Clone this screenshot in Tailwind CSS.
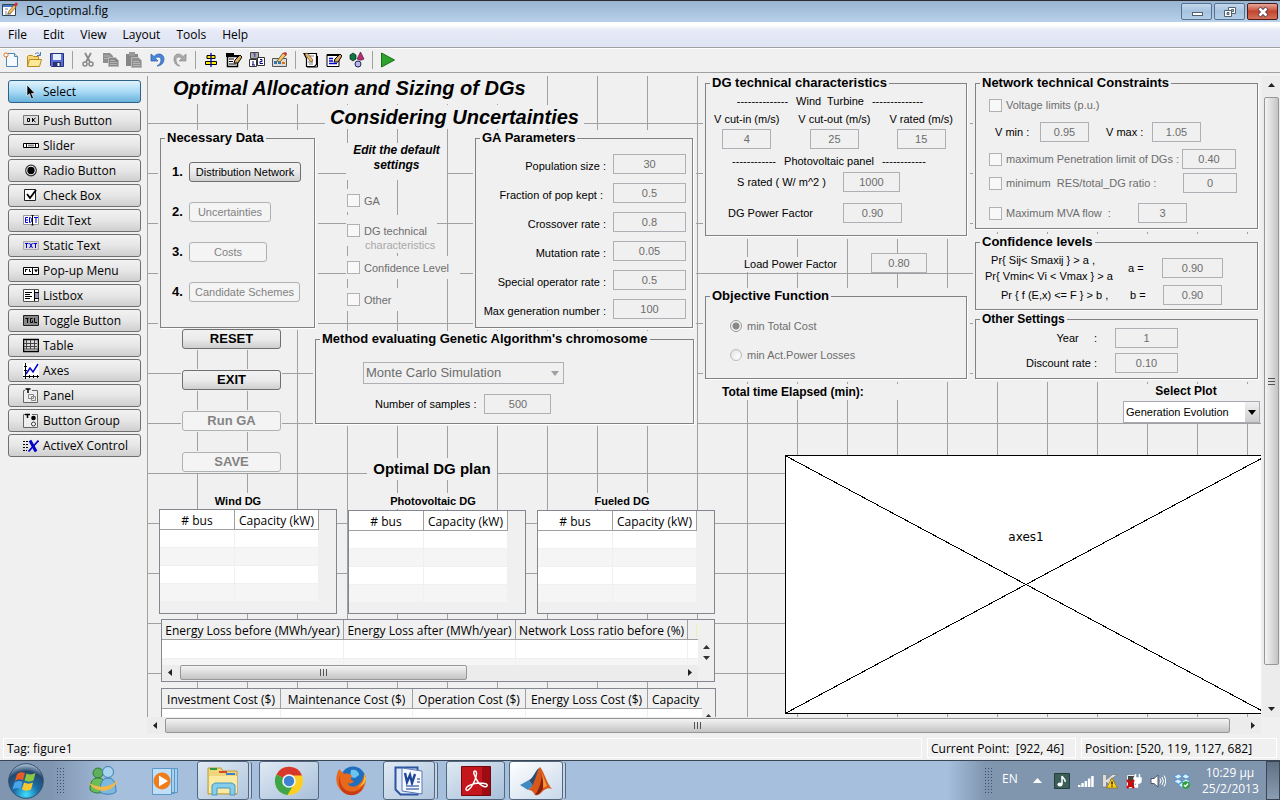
<!DOCTYPE html>
<html lang="en">
<head>
    <meta charset="UTF-8">
    <meta name="viewport" content="width=device-width, initial-scale=1.0">
    <title>DG_optimal.fig</title>
    <script src="https://cdn.jsdelivr.net/npm/@tailwindcss/browser@4"></script>
</head>
<body class="flex h-screen flex-col overflow-hidden bg-[#f0f0f0] font-['Open_Sans','Noto_Sans',sans-serif] text-[12px] leading-4 text-black">

    <!-- Title bar -->
    <header class="flex h-[22px] shrink-0 items-center border-t border-[#2b2b2b] bg-linear-to-b from-[#98b4d2] to-[#b9d1ea] pl-[2px] pr-[2px]">
        <svg class="mb-1 size-4" viewBox="0 0 16 16"><path d="M.5 2.5h13v11H.5z" fill="#fff" stroke="#345"/><path d="M1 3h12v2H1z" fill="#4a78c0"/><path d="M3 7h3M3 10h2M3 12h6" stroke="#789"/><path d="M7 9l5-6 2 2-5 6-3 1z" fill="#f0c060" stroke="#704010" stroke-width=".6"/><path d="M12 3l2-3 2 2-2 3z" fill="#c33"/></svg>
        <h1 class="mb-px ml-2 grow">DG_optimal.fig</h1>
        <div class="flex gap-[2px]">
            <button aria-label="Minimize" class="flex h-[17px] w-[31px] items-center justify-center rounded-[2px] border border-[#56708f] bg-linear-to-b from-[#c4d8ec] via-[#a6c2de] to-[#b4cfe8]"><svg class="h-3 w-4" viewBox="0 0 16 12"><rect x="3.500" y="6.500" width="10" height="3" fill="#fff" stroke="#53606e"/></svg></button>
            <button aria-label="Restore" class="flex h-[17px] w-[31px] items-center justify-center rounded-[2px] border border-[#56708f] bg-linear-to-b from-[#c4d8ec] via-[#a6c2de] to-[#b4cfe8]"><svg class="h-3 w-4" viewBox="0 0 16 12"><path d="M6.500 1.500h7v6h-7z" fill="#fff" stroke="#53606e"/><path d="M9.500 3.500h2v2h-2z" fill="#a6c2de" stroke="#53606e"/><path d="M2.500 4.500h7v6h-7z" fill="#fff" stroke="#53606e"/><path d="M5 6.500h2v2H5z" fill="#a6c2de" stroke="#53606e"/></svg></button>
            <button aria-label="Close" class="flex h-[17px] w-[31px] items-center justify-center rounded-[2px] border border-[#4c1a16] bg-linear-to-b from-[#e4a79b] via-[#c5442c] to-[#d4705a]"><svg class="h-3 w-4" viewBox="0 0 16 12"><path d="M4 2l8 8M12 2l-8 8" stroke="#53404a" stroke-width="4.500"/><path d="M4.500 2.500l7 7M11.500 2.500l-7 7" stroke="#fff" stroke-width="2.600"/></svg></button>
        </div>
    </header>

    <!-- Menu bar -->
    <nav class="flex h-[26px] shrink-0 items-center gap-4 border-b border-[#a0a0a0] bg-linear-to-b from-white from-10% via-[#e6eaf6] via-35% to-[#dfe4f4] pl-2">
        <button>File</button>
        <button>Edit</button>
        <button>View</button>
        <button>Layout</button>
        <button>Tools</button>
        <button>Help</button>
    </nav>

    <!-- Toolbar -->
    <div class="flex h-[25px] shrink-0 items-center gap-[7px] border-t border-b border-t-white border-b-[#a0a0a0] pb-px pl-[3px] [&_button]:size-4 [&_svg]:size-4">
        <button aria-label="New"><svg viewBox="0 0 16 16"><path d="M3.500 1.500h8l3 3v10h-11z" fill="#f4faff" stroke="#4f86b8"/><path d="M11.500 1.500v3h3" fill="#cfe2f4" stroke="#4f86b8"/><path d="M3 0v6M0 3h6M1 1l4 4M5 1L1 5" stroke="#f08030"/><circle cx="3" cy="3" r="1.200" fill="#fff"/></svg></button>
        <button aria-label="Open"><svg viewBox="0 0 16 16"><path d="M1.500 14.500V4.500l1-1h4l1 1h5v3" fill="#f5d776" stroke="#b98a20"/><path d="M1.500 14.500l2-7h12l-2 7z" fill="#fde99a" stroke="#b98a20"/><path d="M9 2c2-2 4-1 5 1M14.500 0v3.500H11" fill="none" stroke="#4a7ab5"/></svg></button>
        <button aria-label="Save"><svg viewBox="0 0 16 16"><path d="M1.500 1.500h13v13h-12l-1-1z" fill="#5a6cd8" stroke="#26307c"/><path d="M4 2h8v6H4z" fill="#e8f0fc"/><path d="M4 10h8v4H4z" fill="#2c3470"/><path d="M8.500 11h2v3h-2z" fill="#fff"/></svg></button>
        <span class="h-[18px] w-px bg-[#a0a0a0]"></span>
        <button aria-label="Cut" disabled><svg viewBox="0 0 16 16"><path d="M5 1l5 9M11 1L6 10" stroke="#8a8a8a" stroke-width="1.800"/><circle cx="5" cy="12" r="2" fill="none" stroke="#8a8a8a" stroke-width="1.500"/><circle cx="11" cy="12" r="2" fill="none" stroke="#8a8a8a" stroke-width="1.500"/></svg></button>
        <button aria-label="Copy" disabled><svg viewBox="0 0 16 16"><path d="M0 1h7l3 3v7H0z" fill="#8e8e8e"/><path d="M5.500 5.500h7l3 3v6h-10z" fill="#888" stroke="#b8b8b8"/><path d="M7 8.500h5M7 10.500h7M7 12.500h7M1 4h6M1 6.500h4" stroke="#b4b4b4"/></svg></button>
        <button aria-label="Paste" disabled><svg viewBox="0 0 16 16"><path d="M0 2h12v12H0z" fill="#868686"/><path d="M3 0h6v4H3z" fill="#999"/><path d="M5.500 5.500h7l3 3v7h-10z" fill="#909090" stroke="#b8b8b8"/><path d="M7 9.500h6M7 11.500h7M7 13.500h7" stroke="#b4b4b4"/></svg></button>
        <button aria-label="Undo"><svg viewBox="0 0 16 16"><path d="M2 2v7h7L6.500 6.500C9 4 12 5 12 8c0 3-2 5-4 6 4 0 7-3 7-7 0-5-6-7-10-2.500z" fill="#4a86d8" stroke="#2a5aa8" stroke-width=".7"/></svg></button>
        <button aria-label="Redo" disabled><svg viewBox="0 0 16 16"><path d="M14 2v7H7l2.500-2.500C7 4 4 5 4 8c0 3 2 5 4 6-4 0-6-3-6-7 0-5 5-7 9-2.500z" fill="#a8a8a8" stroke="#8e8e8e" stroke-width=".7"/></svg></button>
        <span class="h-[18px] w-px bg-[#a0a0a0]"></span>
        <button aria-label="Align Objects"><svg viewBox="0 0 16 16"><path d="M4 3.500h8v3H4zM2.500 9.500h11v3h-11z" fill="#fe0" stroke="#000"/><path d="M8 1v14" stroke="#00a" stroke-width="1.300"/></svg></button>
        <button aria-label="Menu Editor"><svg viewBox="0 0 16 16"><path d="M0 1h8v2h6v2H0z"/><path d="M1.500 4.500h10v10h-10z" fill="#fff" stroke="#000" stroke-width="1.500"/><path d="M3 7h5M3 9.500h4M3 12h7" stroke="#000"/><path d="M8 11l1-3 5-5 2 2-4 6z" fill="#d9a860" stroke="#000"/></svg></button>
        <button aria-label="Tab Order Editor"><svg viewBox="0 0 16 16"><path d="M1.500.5h8v6h-8z" fill="#aaa" stroke="#444"/><path d="M.5 7.500h7v7h-7zM8.500 5.500h7v8h-7z" fill="#fff" stroke="#333"/><path d="M4.500 2h2M5 4h1.500M4 9v4M3 13h3M11 7.500h2v2h-2v2h3" fill="none" stroke="#008"/></svg></button>
        <button aria-label="Toolbar Editor"><svg viewBox="0 0 16 16"><path d="M.5 6.500h14v8H.5z" fill="#ddd" stroke="#555"/><path d="M2 9h3v3H2zM6 9h3v3H6z" fill="#37a"/><path d="M10 10h3v2h-3z" fill="#d70"/><path d="M5 9l6-8 3 2-6 7z" fill="#f3c763" stroke="#764"/><path d="M11 1l3-1 1 2-1 2z" fill="#c33"/></svg></button>
        <span class="h-[18px] w-px bg-[#a0a0a0]"></span>
        <button aria-label="M-file Editor"><svg viewBox="0 0 16 16"><path d="M1 1.500h12.500v11l-2 2H3.500v-8z" fill="#fff" stroke="#000" stroke-width="1.200"/><path d="M14.500 4v11H4" fill="none" stroke="#000"/><path d="M6 4h5M5 10h5M6 12h4" stroke="#777"/><path d="M2 2l2-1 6 7-1 2-2-1z" fill="#f2c060" stroke="#643" stroke-width=".7"/></svg></button>
        <button aria-label="Property Inspector"><svg viewBox="0 0 16 16"><path d="M1 2.500h12v12H1z" fill="#fff" stroke="#000"/><path d="M1 3h12" stroke="#000" stroke-width="2"/><path d="M3 6.500h4M3 9h4M3 11.500h8" stroke="#00c" stroke-width="1.300"/><path d="M8 10l1-3 5-5 2 2-4 6z" fill="#d9a860" stroke="#000"/></svg></button>
        <button aria-label="Object Browser"><svg viewBox="0 0 16 16"><path d="M1 3l3-2 3 2v4L4 9 1 7z" fill="#0a7a40" stroke="#000" stroke-width=".6"/><path d="M11.500 0l3.500 7c-2 1.500-5 1.500-7 0z" fill="#b03070" stroke="#503" stroke-width=".6"/><circle cx="9" cy="12" r="3" fill="#b4b8ec" stroke="#225"/></svg></button>
        <span class="h-[18px] w-px bg-[#a0a0a0]"></span>
        <button aria-label="Run Figure"><svg viewBox="0 0 16 16"><path d="M1.500 1l13 7-13 7z" fill="#2da22d" stroke="#187018"/></svg></button>
    </div>

    <div class="flex min-h-0 grow">
        <!-- Component palette -->
        <aside class="flex w-[147px] shrink-0 flex-col gap-[2px] pl-2 pr-[6px] pt-[7px] [&_button]:flex [&_button]:h-[23px] [&_button]:items-center [&_button]:gap-1 [&_button]:rounded-[3px] [&_button]:border [&_button]:pl-[14px] [&_svg]:size-4">
            <button class="mb-1 border-[#2c628b] bg-linear-to-b from-[#e0f2fc] via-[#a9dbf5] to-[#69b1da]"><svg viewBox="0 0 16 16"><path d="M4 1v11l2.500-2.300L8.500 15l2-1-2-4.500H12z" stroke="#fff" stroke-width=".6"/></svg>Select</button>
            <button class="border-[#707070] bg-linear-to-b from-[#f2f2f2] via-[#e6e6e6] to-[#cfcfcf]"><svg viewBox="0 0 16 16"><path d="M.5 2.500h15v9H.5z" fill="#ddd" stroke="#777"/><path d="M1 11.500h14.500v-9" fill="none" stroke="#333"/><path d="M4.500 5.500h2v3h-2zM9.500 5v4M12.500 5L10 7l2.500 2" fill="none" stroke="#000"/></svg>Push Button</button>
            <button class="border-[#707070] bg-linear-to-b from-[#f2f2f2] via-[#e6e6e6] to-[#cfcfcf]"><svg viewBox="0 0 16 16"><path d="M.5 5.500h15v4H.5z" fill="#fff" stroke="#000"/><path d="M3.500 6v4M12.500 6v4" stroke="#000"/><path d="M5 6.500h6v2H5z" fill="#888"/></svg>Slider</button>
            <button class="border-[#707070] bg-linear-to-b from-[#f2f2f2] via-[#e6e6e6] to-[#cfcfcf]"><svg viewBox="0 0 16 16"><circle cx="8" cy="7.500" r="5.300" fill="#fff" stroke="#333" stroke-width="1.200"/><circle cx="8" cy="7.500" r="3.700"/></svg>Radio Button</button>
            <button class="border-[#707070] bg-linear-to-b from-[#f2f2f2] via-[#e6e6e6] to-[#cfcfcf]"><svg viewBox="0 0 16 16"><path d="M1.500 1.500h11v11h-11z" fill="#fff" stroke="#222"/><path d="M4 6l3 4 6-8" fill="none" stroke="#000" stroke-width="1.800"/></svg>Check Box</button>
            <button class="border-[#707070] bg-linear-to-b from-[#f2f2f2] via-[#e6e6e6] to-[#cfcfcf]"><svg viewBox="0 0 16 16"><path d="M.5 2.500h15v9H.5z" fill="#fff" stroke="#999"/><path d="M5 4.500H2.500v5H5M2.500 7H5M6.500 4.500v5c3 0 3-5 0-5M11 4.500h4M13 4.500V10" fill="none" stroke="#00c"/><path d="M9.500 3v9M8.500 2.500h2M8.500 12h2" stroke="#000"/></svg>Edit Text</button>
            <button class="border-[#707070] bg-linear-to-b from-[#f2f2f2] via-[#e6e6e6] to-[#cfcfcf]"><svg viewBox="0 0 16 16"><path d="M.5 3.500h15v8H.5z" fill="#ddd" stroke="#aaa"/><path d="M2 5.500h3.500M3.500 5.500V10M6.500 5l3 5M9.500 5l-3 5M10.500 5.500H14M12.500 5.500V10" stroke="#00c"/></svg>Static Text</button>
            <button class="border-[#707070] bg-linear-to-b from-[#f2f2f2] via-[#e6e6e6] to-[#cfcfcf]"><svg viewBox="0 0 16 16"><path d="M.5 4.500h15v7H.5z" fill="#fff" stroke="#000"/><path d="M9.500 5v6" stroke="#000"/><path d="M2.500 6v3M3 6.500h1.500M6.500 6v2.500H8" fill="none" stroke="#000"/><path d="M11 6.500h4l-2 3z"/></svg>Pop-up Menu</button>
            <button class="border-[#707070] bg-linear-to-b from-[#f2f2f2] via-[#e6e6e6] to-[#cfcfcf]"><svg viewBox="0 0 16 16"><path d="M.5 1.500h15v12H.5z" fill="#fff" stroke="#555"/><path d="M2 4.500h7M2 6.500h5M2 8.500h7M2 10.500h5" stroke="#000"/><path d="M11.500 2v11M12 4.500h4M12 10.500h4" stroke="#000"/><path d="M12 5h3v5h-3z" fill="#99b"/></svg>Listbox</button>
            <button class="border-[#707070] bg-linear-to-b from-[#f2f2f2] via-[#e6e6e6] to-[#cfcfcf]"><svg viewBox="0 0 16 16"><path d="M.5 2.500h15v10H.5z" fill="#888" stroke="#222"/><path d="M2.500 5.500h3M4.500 5.500V10M9.500 5.500h-2v4h2v-2M11.500 5v4.500H14" fill="none" stroke="#000"/></svg>Toggle Button</button>
            <button class="border-[#707070] bg-linear-to-b from-[#f2f2f2] via-[#e6e6e6] to-[#cfcfcf]"><svg viewBox="0 0 16 16"><path d="M.5 1.500h15v12H.5z" fill="#ddd" stroke="#000" stroke-width="1.500"/><path d="M3.500 2v9M7.500 2v9M11.500 2v9M1 5.500h13M1 8.500h13M1 11h14" stroke="#444"/></svg>Table</button>
            <button class="border-[#707070] bg-linear-to-b from-[#f2f2f2] via-[#e6e6e6] to-[#cfcfcf]"><svg viewBox="0 0 16 16"><path d="M0 0h16v15H0z" fill="#fff"/><path d="M2.500 0v16M0 13.500h16M1 3.500h3M1 7.500h3M6.500 12v3M10.500 12v3M14.500 12v3" stroke="#000"/><path d="M3 11l4-6 3 4 5-8" fill="none" stroke="#00c" stroke-width="1.500"/></svg>Axes</button>
            <button class="border-[#707070] bg-linear-to-b from-[#f2f2f2] via-[#e6e6e6] to-[#cfcfcf]"><svg viewBox="0 0 16 16"><path d="M2 2.500H.5v12h14v-12H9" fill="#eee" stroke="#666"/><path d="M2.500 1h5M5 1v4" stroke="#000" stroke-width="1.500"/><path d="M5.500 6.500h5v4h-5zM8.500 8.500h4v4h-4z" fill="none" stroke="#888"/></svg>Panel</button>
            <button class="border-[#707070] bg-linear-to-b from-[#f2f2f2] via-[#e6e6e6] to-[#cfcfcf]"><svg viewBox="0 0 16 16"><path d="M2 1.500H.5v13h14v-13H9" fill="#eee" stroke="#666"/><path d="M2 1.500h5M4.500 1v4" stroke="#000" stroke-width="1.500"/><circle cx="10.500" cy="5" r="2.300"/><circle cx="10.500" cy="11" r="2" fill="#fff" stroke="#333"/></svg>Button Group</button>
            <button class="border-[#707070] bg-linear-to-b from-[#f2f2f2] via-[#e6e6e6] to-[#cfcfcf]"><svg viewBox="0 0 16 16"><path d="M0 3.500h5M0 6.500h6M0 9.500h5M0 12.500h4" stroke="#000" stroke-dasharray="2 1"/><path d="M7 2.500l6 11" stroke="#00c" stroke-width="3"/><path d="M15.500 2.500L5.500 13.500" stroke="#00c" stroke-width="1.800"/></svg>ActiveX Control</button>
        </aside>

        <div class="flex min-w-0 grow flex-col">
            <!-- Layout canvas: every component sits where the designer dropped it -->
            <main class="relative mt-[3px] min-h-0 grow overflow-hidden bg-[linear-gradient(to_right,#a0a0a0_1px,transparent_1px),linear-gradient(to_bottom,#a0a0a0_1px,transparent_1px)] bg-[size:50px_50px] bg-[position:0_0,0_47px] font-['Liberation_Sans',Arial,sans-serif] text-[11px] leading-[14px] [&_[type=checkbox]]:size-[13px] [&_[type=checkbox]]:shrink-0 [&_[type=checkbox]]:appearance-none [&_[type=checkbox]]:border [&_[type=checkbox]]:border-[#b1b1b1] [&_[type=checkbox]]:bg-[#f8f8f8] [&_[type=text]]:h-5 [&_[type=text]]:shrink-0 [&_[type=text]]:border [&_[type=text]]:border-[#afb0b5] [&_[type=text]]:text-center [&_[type=text]]:text-[#6d6d6d] [&_fieldset]:border [&_fieldset]:border-[#828282] [&_fieldset]:shadow-[1px_1px_0_#fff] [&_label]:whitespace-pre [&_legend]:ml-1 [&_legend]:px-[2px] [&_legend]:font-bold [&_legend]:leading-4">

                <h2 class="absolute left-[3px] top-0 h-7 w-[390px] bg-[#f0f0f0] pl-[23px] text-[20px] leading-6 font-bold italic whitespace-nowrap">Optimal Allocation and Sizing of DGs</h2>
                <h2 class="absolute left-[178px] top-[29px] h-6 w-[259px] bg-[#f0f0f0] text-center text-[20px] leading-6 font-bold italic whitespace-nowrap">Considering Uncertainties</h2>

                <!-- Necessary Data -->
                <div class="absolute left-[11px] top-[54px] h-[200px] w-[160px] bg-[#f0f0f0] pl-[2px]">
                    <fieldset class="h-[198px] w-[155px]">
                        <legend class="text-[13px]">Necessary Data</legend>
                        <div class="flex flex-col gap-5 pl-[11px] pt-4 [&_b]:w-[17px] [&_b]:text-[13px] [&_button]:h-5 [&_button]:rounded-[3px] [&_button]:border [&>div]:flex [&>div]:items-center">
                            <div><b>1.</b><button class="w-28 border-[#707070] bg-linear-to-b from-[#f2f2f2] via-[#ebebeb] to-[#cfcfcf]">Distribution Network</button></div>
                            <div><b>2.</b><button disabled class="w-[82px] border-[#adb2b5] bg-[#f4f4f4] text-[#838383]">Uncertainties</button></div>
                            <div><b>3.</b><button disabled class="w-[78px] border-[#adb2b5] bg-[#f4f4f4] text-[#838383]">Costs</button></div>
                            <div><b>4.</b><button disabled class="w-[111px] border-[#adb2b5] bg-[#f4f4f4] text-[#838383]">Candidate Schemes</button></div>
                        </div>
                    </fieldset>
                </div>

                <!-- Action buttons -->
                <div class="absolute left-[35px] top-[253px] flex w-[99px] flex-col gap-[21px] text-[13px] [&_button]:h-5 [&_button]:rounded-[3px] [&_button]:border [&_button]:font-bold [&_button]:ring-1 [&_button]:ring-[#f0f0f0]">
                    <button class="border-[#707070] bg-linear-to-b from-[#f2f2f2] via-[#ebebeb] to-[#cfcfcf]">RESET</button>
                    <button class="border-[#707070] bg-linear-to-b from-[#f2f2f2] via-[#ebebeb] to-[#cfcfcf]">EXIT</button>
                    <button disabled class="border-[#adb2b5] bg-[#f4f4f4] text-[#838383]">Run GA</button>
                    <button disabled class="border-[#adb2b5] bg-[#f4f4f4] text-[#838383]">SAVE</button>
                </div>

                <!-- Default settings toggles -->
                <p class="absolute left-[199px] top-[67px] h-[37px] w-[101px] bg-[#f0f0f0] text-center text-[12px] leading-[15px] font-bold italic">Edit the default settings</p>
                <label class="absolute left-[199px] top-[113px] flex h-[23px] w-10 items-center gap-1 bg-[#f0f0f0] pl-px text-[#6d6d6d]"><input type="checkbox" disabled>GA</label>
                <label class="absolute left-[199px] top-[139px] flex h-[31px] w-[91px] items-center gap-1 bg-[#f0f0f0] pl-px text-[#6d6d6d]"><input type="checkbox" disabled>DG technical</label>
                <p class="absolute left-[214px] top-[162px] h-[15px] w-[76px] bg-[#f0f0f0] pl-1 text-[#a8a8a8]">characteristics</p>
                <label class="absolute left-[199px] top-[180px] flex h-[23px] w-[114px] items-center gap-1 bg-[#f0f0f0] pl-px text-[#6d6d6d]"><input type="checkbox" disabled>Confidence Level</label>
                <label class="absolute left-[199px] top-[212px] flex h-[23px] w-[60px] items-center gap-1 bg-[#f0f0f0] pl-px text-[#6d6d6d]"><input type="checkbox" disabled>Other</label>

                <!-- GA Parameters -->
                <div class="absolute left-[326px] top-[54px] h-[200px] w-[223px] bg-[#f0f0f0] pl-[2px]">
                    <fieldset class="h-[198px] w-[218px]">
                        <legend class="text-[13px]">GA Parameters</legend>
                        <div class="flex flex-col gap-[9px] pr-[6px] pt-2 [&_input]:w-[73px] [&>div]:flex [&>div]:items-center [&>div]:justify-end [&>div]:gap-[7px] [&_label]:pt-1">
                            <div><label for="pop">Population size :</label><input id="pop" type="text" value="30" disabled></div>
                            <div><label for="kept">Fraction of pop kept : </label><input id="kept" type="text" value="0.5" disabled></div>
                            <div><label for="cross">Crossover rate :</label><input id="cross" type="text" value="0.8" disabled></div>
                            <div><label for="mut">Mutation rate :</label><input id="mut" type="text" value="0.05" disabled></div>
                            <div><label for="spec">Special operator rate :</label><input id="spec" type="text" value="0.5" disabled></div>
                            <div><label for="maxgen">Max generation number :</label><input id="maxgen" type="text" value="100" disabled></div>
                        </div>
                    </fieldset>
                </div>

                <!-- Evaluation method -->
                <div class="absolute left-[166px] top-[255px] h-[95px] w-[384px] bg-[#f0f0f0] pl-[2px]">
                    <fieldset class="h-[93px] w-[379px]">
                        <legend class="text-[13px]">Method evaluating Genetic Algorithm's chromosome</legend>
                        <div class="relative ml-[47px] mt-[15px] w-[201px]">
                            <select disabled aria-label="Evaluation method" class="block h-[22px] w-full appearance-none border border-[#afb0b5] pl-[2px] text-[13px] text-[#6d6d6d] opacity-100">
                                <option>Monte Carlo Simulation</option>
                            </select>
                            <svg class="pointer-events-none absolute right-[5px] top-[9px] h-[5px] w-2" viewBox="0 0 8 5"><path d="M0 0h8L4 5z" fill="#a0a0a0"/></svg>
                        </div>
                        <div class="mt-[10px] flex items-center gap-2 pl-[59px]"><label for="samples">Number of samples :</label><input id="samples" type="text" value="500" disabled class="w-[67px]"></div>
                    </fieldset>
                </div>

                <!-- DG technical characteristics -->
                <div class="absolute left-[556px] -top-px h-[164px] w-[267px] bg-[#f0f0f0] pl-[2px]">
                    <fieldset class="h-[161px] w-[262px]">
                        <legend class="text-[13px]">DG technical characteristics</legend>
                        <p class="mt-[3px] flex justify-center gap-2 whitespace-pre pr-3"><span>--------------</span><span>Wind  Turbine</span><span>--------------</span></p>
                        <div class="mt-1 flex justify-between px-2 pr-[13px] [&_input]:w-[49px] [&>div]:flex [&>div]:flex-col [&>div]:items-center [&>div]:gap-[3px]">
                            <div><label for="cutin">V cut-in (m/s)</label><input id="cutin" type="text" value="4" disabled></div>
                            <div><label for="cutout">V cut-out (m/s)</label><input id="cutout" type="text" value="25" disabled></div>
                            <div><label for="rated">V rated (m/s)</label><input id="rated" type="text" value="15" disabled></div>
                        </div>
                        <p class="mt-[5px] flex justify-center gap-2 pr-[14px]"><span>------------</span><span>Photovoltaic panel</span><span>------------</span></p>
                        <div class="mt-1 flex items-center pl-[31px]"><label for="srated" class="w-[106px]">S rated ( W/ m^2 )</label><input id="srated" type="text" value="1000" disabled class="w-[57px]"></div>
                        <div class="mt-[11px] flex items-center pl-[22px]"><label for="dgpf" class="w-[115px]">DG Power Factor</label><input id="dgpf" type="text" value="0.90" disabled class="w-[59px]"></div>
                    </fieldset>
                </div>

                <label for="loadpf" class="absolute left-[594px] top-[181px] h-[15px] w-[100px] bg-[#f0f0f0] pl-[3px]">Load Power Factor</label>
                <input id="loadpf" type="text" value="0.80" disabled class="absolute left-[724px] top-[177px] w-14 bg-[#f0f0f0]">

                <!-- Objective Function -->
                <div class="absolute left-[556px] top-[212px] h-[94px] w-[267px] bg-[#f0f0f0] pl-[2px]">
                    <fieldset class="h-[91px] w-[262px]">
                        <legend class="text-[13px]">Objective Function</legend>
                        <div class="flex flex-col gap-[15px] pl-6 pt-[15px] text-[#6d6d6d]">
                            <label class="flex items-center gap-[5px]"><input type="radio" name="objective" disabled checked class="size-3 appearance-none rounded-full border border-[#999] bg-[radial-gradient(circle,#888_0_3px,#f4f4f4_4px)]">min Total Cost</label>
                            <label class="flex items-center gap-[5px]"><input type="radio" name="objective" disabled class="size-3 appearance-none rounded-full border border-[#bbb] bg-[radial-gradient(circle_at_70%_70%,#fff,#ddd)]">min Act.Power Losses</label>
                        </div>
                    </fieldset>
                </div>

                <p class="absolute left-[573px] top-[308px] h-4 w-[180px] bg-[#f0f0f0] pl-[2px] text-[12px] leading-4 font-bold">Total time Elapsed (min):</p>

                <!-- Network technical Constraints -->
                <div class="absolute left-[826px] -top-px h-[157px] w-[288px] bg-[#f0f0f0] pl-[2px]">
                    <fieldset class="h-[154px] w-[283px]">
                        <legend class="text-[13px]">Network technical Constraints</legend>
                        <div class="pl-[13px] pt-[7px] text-[#6d6d6d]">
                            <label class="flex items-center gap-1"><input type="checkbox" disabled>Voltage limits (p.u.)</label>
                            <div class="mt-[10px] flex items-center pl-[6px] text-black"><label for="vmin" class="w-[45px]">V min :</label><input id="vmin" type="text" value="0.95" disabled class="w-[49px]"><label for="vmax" class="ml-[17px] w-[46px]">V max :</label><input id="vmax" type="text" value="1.05" disabled class="w-[49px]"></div>
                            <div class="mt-[7px] flex items-center"><label class="flex w-[193px] items-center gap-1"><input type="checkbox" disabled>maximum Penetration limit of DGs :</label><input type="text" value="0.40" disabled aria-label="Maximum penetration" class="w-[54px]"></div>
                            <div class="mt-1 flex items-center"><label class="flex w-[194px] items-center gap-1"><input type="checkbox" disabled>minimum  RES/total_DG ratio :</label><input type="text" value="0" disabled aria-label="Minimum ratio" class="w-[54px]"></div>
                            <div class="mt-[10px] flex items-center"><label class="flex w-[149px] items-center gap-1"><input type="checkbox" disabled>Maximum MVA flow  :</label><input type="text" value="3" disabled aria-label="Maximum MVA flow" class="w-[49px]"></div>
                        </div>
                    </fieldset>
                </div>

                <!-- Confidence levels -->
                <div class="absolute left-[826px] top-[158px] h-[78px] w-[288px] bg-[#f0f0f0] pl-[2px]">
                    <fieldset class="h-[76px] w-[283px]">
                        <legend class="text-[13px]">Confidence levels</legend>
                        <div class="flex items-center pl-[9px] pt-[2px]"><p class="w-[143px] leading-4">&nbsp; Pr{ Sij&lt; Smaxij } &gt; a ,<br>Pr{ Vmin&lt; Vi &lt; Vmax } &gt; a</p><label for="ca" class="w-[34px]">a =</label><input id="ca" type="text" value="0.90" disabled class="w-[61px]"></div>
                        <div class="mt-px flex items-center pl-[25px]"><p class="w-[129px]">Pr { f (E,x) &lt;= F } &gt; b ,</p><label for="cb" class="w-[33px]">b =</label><input id="cb" type="text" value="0.90" disabled class="w-[59px]"></div>
                    </fieldset>
                </div>

                <!-- Other Settings -->
                <div class="absolute left-[826px] top-[235px] h-[71px] w-[288px] bg-[#f0f0f0] pl-[2px]">
                    <fieldset class="h-[68px] w-[283px]">
                        <legend class="text-[12px]">Other Settings</legend>
                        <div class="flex flex-col gap-[5px] pt-px [&_input]:w-[63px] [&_label]:w-[121px] [&_label]:text-right [&>div]:flex [&>div]:items-center [&>div]:gap-[18px]">
                            <div><label for="year">Year     :</label><input id="year" type="text" value="1" disabled></div>
                            <div><label for="disc">Discount rate :</label><input id="disc" type="text" value="0.10" disabled></div>
                        </div>
                    </fieldset>
                </div>

                <!-- Plot selector -->
                <label for="plot" class="absolute left-[964px] top-[308px] h-[17px] w-[150px] bg-[#f0f0f0] text-center text-[12px] font-bold">Select Plot</label>
                <div class="absolute left-[976px] top-[325px] w-[137px]">
                    <select id="plot" class="block h-[22px] w-full appearance-none border border-[#a9abb3] bg-white pl-[2px]">
                        <option>Generation Evolution</option>
                    </select>
                    <span class="pointer-events-none absolute bottom-px right-px top-px flex w-[14px] items-center justify-center bg-linear-to-b from-[#f0f0f0] to-[#cdcdcd]"><svg class="h-[5px] w-2" viewBox="0 0 8 5"><path d="M0 0h8L4 5z"/></svg></span>
                </div>

                <!-- axes1 placeholder -->
                <div class="absolute left-[638px] top-[379px] h-[259px] w-[482px] border border-black bg-white">
                    <svg class="size-full" viewBox="0 0 480 257" preserveAspectRatio="none" shape-rendering="crispEdges"><path d="M0 0L480 257M480 0L0 257" stroke="#000"/></svg>
                    <span class="absolute inset-x-0 top-[74px] text-center font-['DejaVu_Sans',sans-serif] text-[12px]">axes1</span>
                </div>

                <!-- Result tables -->
                <h3 class="absolute left-[220px] top-[382px] h-[22px] w-[130px] bg-[#f0f0f0] text-center text-[15px] leading-[22px] font-bold">Optimal DG plan</h3>
                <h4 class="absolute left-[65px] top-[417px] h-4 w-[52px] bg-[#f0f0f0] text-center leading-4 font-bold">Wind DG</h4>
                <h4 class="absolute left-[238px] top-[417px] h-4 w-[96px] bg-[#f0f0f0] text-center leading-4 font-bold">Photovoltaic DG</h4>
                <h4 class="absolute left-[444px] top-[417px] h-4 w-[62px] bg-[#f0f0f0] text-center leading-4 font-bold">Fueled DG</h4>

                <div class="absolute left-3 top-[433px] h-[105px] w-[178px] border border-[#828790] bg-[#f0f0f0] font-['Open_Sans','Noto_Sans',sans-serif] text-[12px] [&_td]:h-[18px] [&_td]:border-b [&_td]:border-r [&_td]:border-[#f0f0f0] [&_th]:h-5 [&_th]:border-b [&_th]:border-r [&_th]:border-[#a0a0a0] [&_th]:pt-[2px] [&_th]:font-normal [&_tr]:bg-white [&_tr:nth-child(even)]:bg-[#f5f5f5]">
                    <table class="w-[159px] table-fixed border-separate border-spacing-0 whitespace-nowrap">
                        <thead class="[&_tr]:bg-[#f0f0f0]"><tr><th class="w-[75px]"># bus</th><th>Capacity (kW)</th></tr></thead>
                        <tbody><tr><td></td><td></td></tr><tr><td></td><td></td></tr><tr><td></td><td></td></tr><tr><td></td><td></td></tr></tbody>
                    </table>
                </div>
                <div class="absolute left-[201px] top-[434px] h-[104px] w-[178px] border border-[#828790] bg-[#f0f0f0] font-['Open_Sans','Noto_Sans',sans-serif] text-[12px] [&_td]:h-[18px] [&_td]:border-b [&_td]:border-r [&_td]:border-[#f0f0f0] [&_th]:h-5 [&_th]:border-b [&_th]:border-r [&_th]:border-[#a0a0a0] [&_th]:pt-[2px] [&_th]:font-normal [&_tr]:bg-white [&_tr:nth-child(even)]:bg-[#f5f5f5]">
                    <table class="w-[159px] table-fixed border-separate border-spacing-0 whitespace-nowrap">
                        <thead class="[&_tr]:bg-[#f0f0f0]"><tr><th class="w-[75px]"># bus</th><th>Capacity (kW)</th></tr></thead>
                        <tbody><tr><td></td><td></td></tr><tr><td></td><td></td></tr><tr><td></td><td></td></tr><tr><td></td><td></td></tr></tbody>
                    </table>
                </div>
                <div class="absolute left-[390px] top-[434px] h-[104px] w-[178px] border border-[#828790] bg-[#f0f0f0] font-['Open_Sans','Noto_Sans',sans-serif] text-[12px] [&_td]:h-[18px] [&_td]:border-b [&_td]:border-r [&_td]:border-[#f0f0f0] [&_th]:h-5 [&_th]:border-b [&_th]:border-r [&_th]:border-[#a0a0a0] [&_th]:pt-[2px] [&_th]:font-normal [&_tr]:bg-white [&_tr:nth-child(even)]:bg-[#f5f5f5]">
                    <table class="w-[159px] table-fixed border-separate border-spacing-0 whitespace-nowrap">
                        <thead class="[&_tr]:bg-[#f0f0f0]"><tr><th class="w-[75px]"># bus</th><th>Capacity (kW)</th></tr></thead>
                        <tbody><tr><td></td><td></td></tr><tr><td></td><td></td></tr><tr><td></td><td></td></tr><tr><td></td><td></td></tr></tbody>
                    </table>
                </div>

                <div class="absolute left-[14px] top-[543px] flex h-[63px] w-[554px] flex-col border border-[#828790] bg-[#f0f0f0] font-['Open_Sans','Noto_Sans',sans-serif] text-[12px]">
                    <div class="flex h-[45px]">
                        <div class="w-[536px] overflow-hidden [&_td]:h-[19px] [&_td]:border-b [&_td]:border-r [&_td]:border-[#f0f0f0] [&_th]:h-5 [&_th]:border-b [&_th]:border-r [&_th]:border-[#a0a0a0] [&_th]:pt-[2px] [&_th]:font-normal">
                            <table class="w-[706px] table-fixed border-separate border-spacing-0 whitespace-nowrap">
                                <thead><tr><th class="w-[182px]">Energy Loss before (MWh/year)</th><th class="w-[172px]">Energy Loss after (MWh/year)</th><th class="w-[172px]">Network Loss ratio before (%)</th><th><span class="ml-2 block h-3 w-px bg-[#f0f0a0]"></span></th></tr></thead>
                                <tbody><tr class="bg-white"><td></td><td></td><td></td><td></td></tr><tr class="bg-[#f5f5f5]"><td></td><td></td><td></td><td></td></tr></tbody>
                            </table>
                        </div>
                        <div class="flex grow flex-col items-center justify-end gap-[7px] pb-[5px]">
                            <svg class="h-1 w-[7px]" viewBox="0 0 7 4"><path d="M0 4h7L3.500 0z" fill="#333"/></svg>
                            <svg class="h-1 w-[7px]" viewBox="0 0 7 4"><path d="M0 0h7L3.500 4z" fill="#333"/></svg>
                        </div>
                    </div>
                    <div class="mr-4 flex h-[15px] items-center bg-[#ececec] px-[6px]">
                        <svg class="h-[7px] w-1" viewBox="0 0 4 7"><path d="M4 0v7L0 3.500z" fill="#222"/></svg>
                        <span class="ml-2 flex h-[15px] w-[287px] items-center justify-center gap-px rounded-[2px] border border-[#979797] bg-linear-to-b from-[#f4f4f4] via-[#dcdcdc] to-[#c4c4c4]"><i class="h-[7px] w-px bg-[#555]"></i><i class="mx-px h-[7px] w-px bg-[#555]"></i><i class="h-[7px] w-px bg-[#555]"></i></span>
                        <svg class="ml-auto h-[7px] w-1" viewBox="0 0 4 7"><path d="M0 0v7l4-3.500z" fill="#222"/></svg>
                    </div>
                </div>

                <div class="absolute left-[14px] top-[612px] flex h-[63px] w-[555px] border border-[#828790] bg-[#f0f0f0] font-['Open_Sans','Noto_Sans',sans-serif] text-[12px]">
                    <div class="w-[540px] overflow-hidden [&_td]:h-[19px] [&_td]:border-r [&_td]:border-[#f0f0f0] [&_th]:h-5 [&_th]:border-b [&_th]:border-r [&_th]:border-[#a0a0a0] [&_th]:pt-[2px] [&_th]:font-normal">
                        <table class="w-[606px] table-fixed border-separate border-spacing-0 whitespace-nowrap">
                            <thead><tr><th class="w-[119px]">Investment Cost ($)</th><th class="w-[132px]">Maintenance Cost ($)</th><th class="w-[113px]">Operation Cost ($)</th><th class="w-[122px]">Energy Loss Cost ($)</th><th class="w-[120px] pl-1 text-left">Capacity</th></tr></thead>
                            <tbody><tr class="bg-white"><td></td><td></td><td></td><td></td><td></td></tr></tbody>
                        </table>
                    </div>
                    <svg class="mx-auto mt-[25px] h-1 w-[7px]" viewBox="0 0 7 4"><path d="M0 4h7L3.500 0z" fill="#333"/></svg>
                </div>
            </main>

            <!-- Horizontal scroll bar -->
            <div class="flex h-[17px] shrink-0 items-center bg-[#ececec] pl-[6px] pr-[6px]">
                <svg class="h-[7px] w-1" viewBox="0 0 4 7"><path d="M4 0v7L0 3.500z" fill="#222"/></svg>
                <span class="ml-2 mr-[21px] flex h-[15px] grow items-center justify-center gap-px rounded-[2px] border border-[#979797] bg-linear-to-b from-[#f4f4f4] via-[#dcdcdc] to-[#c4c4c4]"><i class="h-[7px] w-px bg-[#555]"></i><i class="mx-px h-[7px] w-px bg-[#555]"></i><i class="h-[7px] w-px bg-[#555]"></i></span>
                <svg class="h-[7px] w-1" viewBox="0 0 4 7"><path d="M0 0v7l4-3.500z" fill="#222"/></svg>
            </div>
        </div>

        <!-- Vertical scroll bar -->
        <div class="mb-[17px] ml-px mt-[3px] flex w-[18px] shrink-0 flex-col items-center bg-[#ececec] pb-[6px] pt-[7px]">
            <svg class="h-1 w-[7px]" viewBox="0 0 7 4"><path d="M0 4h7L3.500 0z" fill="#222"/></svg>
            <span class="mb-[42px] mt-[10px] flex w-[15px] grow flex-col items-center justify-center gap-px rounded-[2px] border border-[#979797] bg-linear-to-r from-[#f4f4f4] via-[#dcdcdc] to-[#c4c4c4]"><i class="h-px w-[7px] bg-[#555]"></i><i class="my-px h-px w-[7px] bg-[#555]"></i><i class="h-px w-[7px] bg-[#555]"></i></span>
            <svg class="h-1 w-[7px]" viewBox="0 0 7 4"><path d="M0 0h7L3.500 4z" fill="#222"/></svg>
        </div>
    </div>

    <!-- Status bar -->
    <div class="mt-1 flex h-5 shrink-0 gap-[5px] px-[3px] [&_p]:border [&_p]:border-white [&_p]:pl-[3px] [&_p]:leading-[19px] [&_p]:whitespace-pre">
        <p class="grow">Tag: figure1</p>
        <p class="w-[149px]">Current Point:  [922, 46]</p>
        <p class="w-[196px]">Position: [520, 119, 1127, 682]</p>
    </div>

    <!-- Taskbar -->
    <footer class="mt-[2px] flex h-10 shrink-0 items-center border-t border-[#3a4656] bg-[linear-gradient(to_right,#8095b0_4%,#a5bfdd_9%,#a5bfdd_74%,#8095ae_77%)]">
        <button aria-label="Start" class="ml-2 size-9">
            <svg viewBox="0 0 36 36"><defs><radialGradient id="orb" cx=".5" cy=".9" r=".9"><stop offset="0" stop-color="#3fe0ff"/><stop offset=".4" stop-color="#1b6ea8"/><stop offset=".75" stop-color="#24476e"/><stop offset="1" stop-color="#b8cce0"/></radialGradient></defs><circle cx="18" cy="18" r="17.300" fill="url(#orb)" stroke="#33506f"/><path d="M9 11c3-2 5-2 8-1l-2 7c-3-1-5-1-8 1z" fill="#ea5a24"/><path d="M18.500 10.500c3 1.500 6 1 9-.5l-2 7.500c-3 1.500-6 1.500-9 0z" fill="#8dc63f"/><path d="M6.500 19.500c3-2 5.500-2 8-.500l-2 7c-3-1.500-5-1-8 .500z" fill="#4aa5e8"/><path d="M16 19.500c3 1.500 6 1.500 9 0l-2 7c-3 1.500-6 1.500-9 0z" fill="#fcc62d"/></svg>
        </button>
        <span class="ml-3 h-7 w-[9px] bg-[radial-gradient(circle,#40506a_1px,transparent_1px)] bg-[size:3px_3px]"></span>
        <button aria-label="Messenger" class="ml-[22px] size-8">
            <svg viewBox="0 0 32 32"><circle cx="11" cy="8" r="5" fill="#5fae5a" stroke="#2f7a3a"/><path d="M3 25c0-9 3-12 8-12s8 3 8 12c-4 4-12 4-16 0z" fill="#6cbc58" stroke="#2f7a3a"/><circle cx="21" cy="7" r="5.500" fill="#a8d4f0" stroke="#3d80b0"/><path d="M13 27c0-10 3-14 8-14s8 4 8 14c-4 3-12 3-16 0z" fill="#7db8e0" stroke="#3d80b0"/><path d="M1 17c8 6 20 7 30-2-5 13-21 15-30 2z" fill="#f0b848"/></svg>
        </button>
        <button aria-label="Media Player" class="ml-[31px] size-8">
            <svg viewBox="0 0 32 32"><path d="M12.500 3.500h15v24h-15zM9.500 3.500h15v25h-15z" fill="#a8d0ee" stroke="#5a98c8"/><path d="M2.500 3.500h19v26h-19z" fill="#c0def4" stroke="#5a98c8"/><circle cx="12" cy="16" r="8.500" fill="#f07c1c"/><path d="M9 10.500l9 5.500-9 5.500z" fill="#fff"/></svg>
        </button>
        <button aria-label="Explorer" class="ml-[15px] flex h-[39px] w-[52px] items-center justify-center rounded-[3px] border border-[#53687f] bg-linear-to-br from-[#dfe9f3] to-[#b0c6de] shadow-[3px_0_0_-1px_#c4d4e6,4px_0_0_-1px_#53687f]">
            <svg class="size-8" viewBox="0 0 32 32"><path d="M1 3h13l2 3h14v23H1z" fill="#f0d67a" stroke="#c09a38"/><path d="M3 3h7v2H3z" fill="#2c9a40"/><path d="M12 6h8v2h-8z" fill="#d84a28"/><path d="M19 8h9v2h-9z" fill="#3a80d0"/><path d="M2 11h28v17H2z" fill="#faeaa2"/><path d="M5 30V20l3-2h17l3 2v10h-5v-7H10v7z" fill="#86cdea" stroke="#4698c4"/></svg>
        </button>
        <button aria-label="Chrome" class="ml-[10px] flex h-[39px] w-[60px] items-center justify-center rounded-[3px] border border-[#53687f] bg-linear-to-br from-[#dfe9f3] to-[#a8c0da]">
            <svg class="size-8" viewBox="0 0 32 32"><circle cx="16" cy="16" r="14" fill="#fccf20"/><path d="M16 16L3.500 9.500A14 14 0 0 1 29 10.500H16z" fill="#d8382c"/><path d="M16 16L3.500 9.500A14 14 0 0 0 14.500 30l6.500-11z" fill="#3ea648"/><circle cx="16" cy="16" r="6.800" fill="#f5f5f5"/><circle cx="16" cy="16" r="5.200" fill="#3e82d2"/></svg>
        </button>
        <button aria-label="Firefox" class="ml-4 size-8">
            <svg viewBox="0 0 32 32"><circle cx="18" cy="14" r="12.500" fill="#1f6fbe"/><path d="M16 5c4-1 8 1 8 5l-4 3-5-1z" fill="#6cc4ee"/><path d="M4 4c-3 6-4 13 0 19 6 9 19 9 24 1 3-5 4-11 1-16 0 5-2 9-6 12-5 3-10 1-10-2 3 1 5 0 6-2-3 0-4-3-2-5-2-2-5-3-7-2-2-1-4-3-6-5z" fill="#e8691c"/><path d="M5 10c-1 7 2 14 8 16 7 2 13-1 16-8-1 9-8 13-15 12C5 28 2 18 5 10z" fill="#c83c14"/><path d="M29 9c1 6-2 11-6 13 5-1 8-5 8-9z" fill="#fcc030"/></svg>
        </button>
        <button aria-label="Word" class="ml-4 flex h-[39px] w-[52px] items-center justify-center rounded-[3px] border border-[#53687f] bg-linear-to-br from-[#dfe9f3] to-[#b0c6de] shadow-[3px_0_0_-1px_#c4d4e6,4px_0_0_-1px_#53687f]">
            <svg class="size-8" viewBox="0 0 32 32"><path d="M2.500 2.500h22v27h-17l-5-5z" fill="#dde8f8" stroke="#2d55a0" stroke-width="2"/><path d="M9 3l20 3v23L9 26z" fill="#f6f9ff" stroke="#5878b8"/><path d="M12 8l2 9 3-7 2 8 3-9" fill="none" stroke="#1f4694" stroke-width="2.400"/><path d="M13 21h13M13 24h13M24 14h3M24 17h3" stroke="#5878b8" stroke-width="1.500"/></svg>
        </button>
        <button aria-label="Adobe Reader" class="ml-[11px] flex h-[39px] w-[59px] items-center justify-center rounded-[3px] border border-[#53687f] bg-linear-to-br from-[#dfe9f3] to-[#a8c0da]">
            <svg class="size-8" viewBox="0 0 32 32"><path d="M1.500 1.500h29v29h-29z" fill="#c4161c" stroke="#70080c"/><path d="M22 2h8v28h-8z" fill="#9c0c12"/><path d="M15 6c3 0 1 8-2 13-3 6-7 8-7 5s8-6 13-6c6 0 9 1 8 3s-6 0-9-4c-3-5-6-11-3-11z" fill="none" stroke="#fff" stroke-width="1.500"/></svg>
        </button>
        <button aria-label="MATLAB" class="ml-1 flex h-[39px] w-[54px] items-center justify-center rounded-[3px] border border-[#53687f] bg-linear-to-br from-white to-[#c8d8ea] shadow-[3px_0_0_-1px_#c4d4e6,4px_0_0_-1px_#53687f]">
            <svg class="size-8" viewBox="0 0 32 32"><path d="M0 20l9-5 4 6-5 4z" fill="#3f8ac0"/><path d="M9 15c5-2 7-12 11-12l-6 19-1-1z" fill="#2b4e70"/><path d="M20 2c4 4 7 17 12 22-4-2-7 0-9 2-3 3-5 5-8 4-2-4-4-5-7-5 7-3 9-21 12-23z" fill="#d8581c"/><path d="M20 2c3 5 2 19-5 28 5 0 6-4 8-6 1-9-1-17-3-22z" fill="#8c2010"/><path d="M20 3c2 6 4 14 3 20l4-2z" fill="#f59a38"/></svg>
        </button>

        <!-- Notification area -->
        <div class="ml-auto flex h-full items-center text-white">
            <span class="h-7 w-[9px] bg-[radial-gradient(circle,#40506a_1px,transparent_1px)] bg-[size:3px_3px]"></span>
            <span class="mb-1 ml-[9px] w-[31px]">EN</span>
            <svg class="h-[5px] w-[9px]" viewBox="0 0 9 5"><path d="M0 5h9L4.500 0z" fill="#fff"/></svg>
            <div class="ml-3 flex gap-2 [&_svg]:size-4">
                <svg viewBox="0 0 16 16"><path d="M.5.5h15v15H.5z" fill="#3b5f58" stroke="#263c3a"/><path d="M8 3v8M8 3c1 3 4 3 3 6" fill="none" stroke="#fff" stroke-width="1.500"/><ellipse cx="6" cy="11.500" rx="2.600" ry="2" fill="#fff"/></svg>
                <svg viewBox="0 0 16 16"><path d="M0 12h2.500v2H0zM3.300 10h2.500v4H3.300zM6.600 8h2.500v6H6.600zM9.900 5.500h2.500V14H9.900zM13.200 3h2.500v11h-2.500z" fill="#fff"/></svg>
                <svg viewBox="0 0 16 16"><path d="M.5 1.500h4v5l6-5h5L8 7l5 7H9L4.500 9v5h-4z" fill="#ddd" stroke="#777" stroke-width=".7"/><path d="M10 5l5.500 10h-11z" fill="#fcd020" stroke="#8a6a00" stroke-width=".7"/><path d="M10 8.500v3M10 12.500v1.200" stroke="#000" stroke-width="1.300"/></svg>
                <svg viewBox="0 0 16 16"><path d="M1.500 2.500h7v12h-7z" fill="#444" stroke="#eee"/><path d="M8 5h7v3c0 3-7 3-7 0zM9.500 1v4M13.500 1v4M11.500 10v4H7" fill="#fff" stroke="#fff" stroke-width="1.400"/><path d="M1 7l7 8M8 7l-7 8" stroke="#e00000" stroke-width="2.400"/></svg>
                <svg viewBox="0 0 16 16"><path d="M1 5.500h3L8 2v12l-4-3.500H1z" fill="#fff" stroke="#556"/><path d="M10 5.500q2 2.500 0 5M12 4q3 4 0 8M14 2.500q3.500 5.500 0 11" fill="none" stroke="#fff"/></svg>
                <svg viewBox="0 0 16 16"><path d="M4.500 1L8 3.500 4 6 0 3.800zM11.500 1L16 3.800 12 6 8 3.500zM0 8.500L4 6l4 2.500L4.500 11zM16 8.500L12 6 8 8.500l3.500 2.500zM4.500 12L8 9.500l3.500 2.500L8 14.500z" fill="#d8efff" stroke="#2a8cd8" stroke-width=".6"/><circle cx="12" cy="12" r="3.800" fill="#2ca03c"/><path d="M10 12l1.500 1.500 2.500-3" fill="none" stroke="#fff" stroke-width="1.300"/></svg>
            </div>
            <time class="ml-3 w-[56px] text-center whitespace-nowrap">10:29 μμ<br>25/2/2013</time>
            <button aria-label="Show desktop" class="ml-2 h-full w-[14px] border border-[#3a4656] bg-linear-to-b from-[#5f7183] to-[#8a9db3]"></button>
        </div>
    </footer>
</body>
</html>
